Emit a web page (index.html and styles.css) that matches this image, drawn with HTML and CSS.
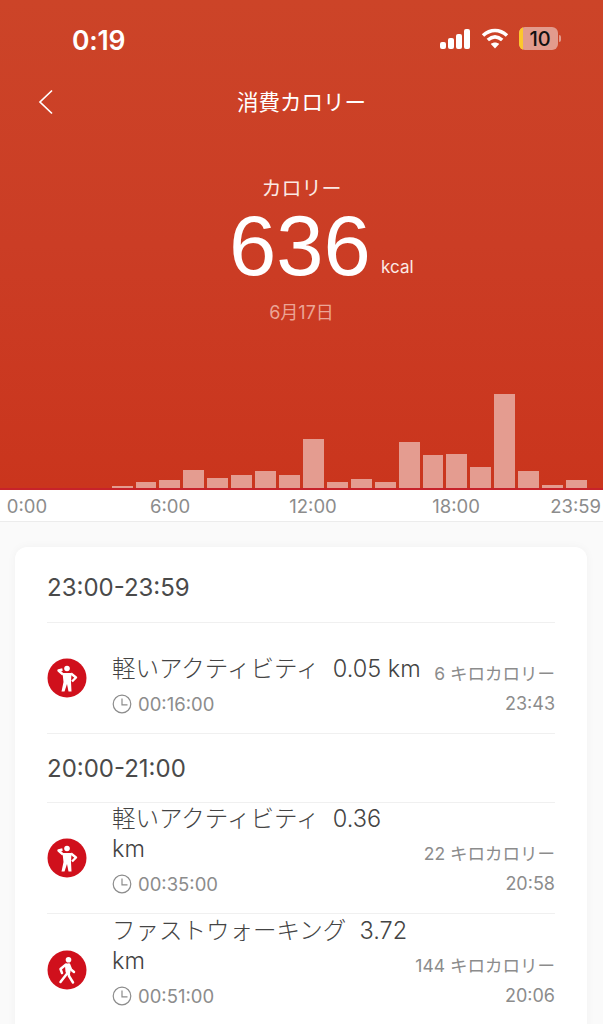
FILE: index.html
```html
<!DOCTYPE html>
<html lang="ja">
<head>
<meta charset="utf-8">
<title>消費カロリー</title>
<link rel="stylesheet" href="styles.css">
</head>
<body>
<div class="page">
  <header class="hero">
    <div class="status">
      <span class="clock-time">0:19</span>
      <div class="status-icons">
        <svg class="signal" width="31" height="20" viewBox="0 0 31 20"><rect x="0" y="13" width="6" height="7" rx="2"/><rect x="8" y="9" width="6" height="11" rx="2"/><rect x="16" y="5" width="6" height="15" rx="2"/><rect x="24" y="0" width="6" height="20" rx="2"/></svg>
        <svg class="wifi" width="28" height="21" viewBox="0 0 28 21"><path d="M2 7.5C9.5 .8 18.500 .8 26 7.500" /><path d="M6.800 12C11.500 8 16.500 8 21.200 12"/><path class="wifi-dot" d="M14 20.500L9.800 16C12.300 14 15.700 14 18.200 16Z"/></svg>
        <div class="battery">
          <div class="battery-body"><span class="battery-level"></span><span class="battery-num">10</span></div>
          <span class="battery-cap"></span>
        </div>
      </div>
    </div>
    <div class="navbar">
      <svg class="back" width="16" height="26" viewBox="0 0 16 26"><path d="M14 1.500L2 13L14 24.500"/></svg>
      <h1 class="nav-title">消費カロリー</h1>
    </div>
    <div class="summary">
      <div class="summary-label">カロリー</div>
      <div class="summary-value"><span class="value-num">636</span><span class="value-unit">kcal</span></div>
      <div class="summary-date">6月17日</div>
    </div>
    <div class="chart">
      <i></i><i></i><i></i><i></i>
      <i class="bar" style="height:2px"></i>
      <i class="bar" style="height:6px"></i>
      <i class="bar" style="height:8px"></i>
      <i class="bar" style="height:18px"></i>
      <i class="bar" style="height:10px"></i>
      <i class="bar" style="height:13px"></i>
      <i class="bar" style="height:17px"></i>
      <i class="bar" style="height:13px"></i>
      <i class="bar" style="height:49px"></i>
      <i class="bar" style="height:6px"></i>
      <i class="bar" style="height:9px"></i>
      <i class="bar" style="height:6px"></i>
      <i class="bar" style="height:46px"></i>
      <i class="bar" style="height:33px"></i>
      <i class="bar" style="height:34px"></i>
      <i class="bar" style="height:21px"></i>
      <i class="bar" style="height:94px"></i>
      <i class="bar" style="height:17px"></i>
      <i class="bar" style="height:3px"></i>
      <i class="bar" style="height:8px"></i>
    </div>
  </header>
  <div class="axis">
    <div class="ticks"><span class="tick">0:00</span><span class="tick">6:00</span><span class="tick">12:00</span><span class="tick">18:00</span></div>
    <span class="tick-end">23:59</span>
  </div>
  <main class="content">
    <section class="card">
      <h2 class="group-title">23:00-23:59</h2>
      <div class="row">
        <svg class="act-icon" viewBox="0 0 40 40"><use href="#stand"/></svg>
        <div class="row-main">
          <div class="row-title">軽いアクティビティ&nbsp; 0.05 km</div>
          <div class="row-dur"><svg class="dur-icon" viewBox="0 0 20 20"><use href="#clock"/></svg>00:16:00</div>
        </div>
        <div class="row-side"><div class="kcal">6 キロカロリー</div><div class="time">23:43</div></div>
      </div>
      <h2 class="group-title group-next">20:00-21:00</h2>
      <div class="row">
        <svg class="act-icon" viewBox="0 0 40 40"><use href="#stand"/></svg>
        <div class="row-main">
          <div class="row-title">軽いアクティビティ&nbsp; 0.36<br>km</div>
          <div class="row-dur"><svg class="dur-icon" viewBox="0 0 20 20"><use href="#clock"/></svg>00:35:00</div>
        </div>
        <div class="row-side"><div class="kcal">22 キロカロリー</div><div class="time">20:58</div></div>
      </div>
      <div class="row">
        <svg class="act-icon" viewBox="0 0 40 40"><use href="#walk"/></svg>
        <div class="row-main">
          <div class="row-title">ファストウォーキング&nbsp; 3.72<br>km</div>
          <div class="row-dur"><svg class="dur-icon" viewBox="0 0 20 20"><use href="#clock"/></svg>00:51:00</div>
        </div>
        <div class="row-side"><div class="kcal">144 キロカロリー</div><div class="time">20:06</div></div>
      </div>
    </section>
  </main>
</div>
<svg class="defs" width="0" height="0">
  <defs>
    <g id="clock"><circle cx="10" cy="10" r="8.800" fill="none" stroke="#8c8c8c" stroke-width="1.200"/><path d="M10 4.500V10.800H15.500" fill="none" stroke="#8c8c8c" stroke-width="1.200"/></g>
    <g id="stand">
      <circle cx="20" cy="20" r="19.500" fill="#d0101c"/>
      <circle cx="20" cy="10.500" r="2.800" fill="#fff"/>
      <path fill="none" stroke="#fff" stroke-width="2.400" stroke-linejoin="round" d="M15.500 11.500L11.500 12.500L16 16.500M24 15.500L29 19.500L25 23.500"/>
      <path fill="#fff" d="M15.500 15H24.500L24 24L24.500 33.500H21.500L20 26L17.500 33.500H14.500L16.500 24Z"/>
    </g>
    <g id="walk">
      <circle cx="20" cy="20" r="19.500" fill="#d0101c"/>
      <circle cx="21.500" cy="9.800" r="2.800" fill="#fff"/>
      <path fill="none" stroke="#fff" stroke-width="5" stroke-linecap="round" d="M20.500 16L21 21.500"/>
      <path fill="none" stroke="#fff" stroke-width="2.500" stroke-linejoin="round" stroke-linecap="round" d="M19 14.500L13.500 19L15 23M22 14.500L24 19.500L27 22M20.500 23L13.500 32M21.500 22L22 26L26 32.500"/>
    </g>
  </defs>
</svg>
</body>
</html>
```

FILE: styles.css
```css
* { box-sizing: border-box; }
html, body { margin: 0; padding: 0; }
body {
  width: 603px;
  height: 1024px;
  overflow: hidden;
  background: #fafafa;
  font-family: Inter, Roboto, "Noto Sans CJK JP", sans-serif;
}
.page { width: 603px; height: 1024px; overflow: hidden; display: flex; flex-direction: column; }
.defs { display: block; height: 0; }

.hero {
  flex: none;
  height: 490px;
  background: linear-gradient(#cc4428 0%, #cb3d25 50%, #ca351d 100%);
  border-bottom: 2px solid #c7222a;
  color: #fff;
  display: flex;
  flex-direction: column;
}
.status {
  flex: none;
  height: 78px;
  padding: 24px 42px 0 72px;
  display: flex;
  justify-content: space-between;
  align-items: flex-start;
}
.clock-time { font-size: 26.500px; font-weight: 600; line-height: 32px; letter-spacing: -.2px; }
.status-icons { display: flex; align-items: center; gap: 10px; padding-top: 3px; }
.signal { fill: #fff; }
.wifi { fill: #fff; }
.wifi path { fill: none; stroke: #fff; stroke-width: 3.600; }
.wifi .wifi-dot { fill: #fff; stroke: none; }
.battery { display: flex; align-items: center; gap: 1px; }
.battery-body {
  width: 39px; height: 23px; border-radius: 6px;
  background: #e29b8d;
  overflow: hidden;
  position: relative;
  display: flex; align-items: center; justify-content: center;
}
.battery-level { position: absolute; left: 0; top: 0; bottom: 0; width: 4px; background: #fcc72c; }
.battery-num { font-size: 20px; font-weight: 500; color: #111; padding-left: 3px; }
.battery-cap { width: 2px; height: 7px; background: #e29b8d; border-radius: 0 2px 2px 0; }

.navbar {
  flex: none;
  height: 48px;
  position: relative;
  display: flex;
  align-items: center;
  justify-content: center;
}
.back { position: absolute; left: 38px; top: 11px; fill: none; stroke: #fff; stroke-width: 1.700; }
.nav-title { margin: 0; font-size: 21.500px; font-weight: 400; line-height: 48px; color: #fff; }

.summary { display: flex; flex-direction: column; align-items: center; padding-top: 48px; flex: 1; }
.summary-label { font-size: 20px; line-height: 30px; color: #fbe9e4; }
.summary-value { position: relative; line-height: 88px; height: 88px; margin-top: -2px; }
.value-num { font-size: 85px; font-weight: 400; line-height: 88px; color: #fff; display: block; font-family: "Liberation Sans", sans-serif; margin-left: -3px; }
.value-unit { position: absolute; left: 149px; bottom: 13px; line-height: 20px; font-size: 17px; color: #fbe9e4; }
.summary-date { font-size: 18px; line-height: 24px; color: #eba596; margin-top: 11px; }

.chart {
  flex: none;
  height: 94px;
  padding: 0 16px;
  display: grid;
  grid-template-columns: repeat(24, 1fr);
  column-gap: 3px;
  align-items: end;
}
.bar { display: block; background: #e49c90; }

.axis {
  flex: none;
  height: 32px;
  background: #fff;
  border-bottom: 1px solid #ececec;
  padding: 0 2px 0 27px;
  display: flex;
  align-items: center;
  font-size: 18.500px;
  color: #8c8c8c;
}
.ticks { flex: 1; min-width: 0; display: flex; gap: 143px; }
.tick { width: 0; display: flex; justify-content: center; white-space: nowrap; }
.tick-end { flex: none; }

.content { flex: 1; padding: 25px 16px 0 15px; }
.card {
  background: #fff;
  border-radius: 12px 12px 0 0;
  box-shadow: 0 0 10px rgba(0,0,0,.04);
  padding: 0 32px;
  height: 520px;
}
.group-title {
  margin: 0;
  height: 76px;
  line-height: 82px;
  font-size: 24px;
  font-weight: 400;
  color: #4a4a4a;
  border-bottom: 1px solid #f0f0f0;
}
.group-next { height: 69px; line-height: 70px; }
.row {
  height: 111px;
  display: flex;
  align-items: flex-end;
  padding-bottom: 16px;
  border-bottom: 1px solid #f0f0f0;
}
.row:last-child { border-bottom: 0; }
.act-icon { width: 40px; height: 40px; flex: none; align-self: center; margin-top: 16px; margin-right: 25px; }
.row-main { flex: 1; min-width: 0; padding-right: 2px; }
.row-title { font-size: 23.500px; line-height: 30px; color: #444; font-weight: 300; white-space: nowrap; }
.row-dur { display: flex; align-items: center; height: 26px; margin-top: 7px; font-size: 18.500px; color: #8c8c8c; }
.dur-icon { width: 20px; height: 20px; margin-right: 6px; flex: none; }
.row-side { flex: none; text-align: right; color: #8c8c8c; }
.kcal { font-size: 17.500px; line-height: 26px; white-space: nowrap; }
.time { font-size: 18px; line-height: 26px; margin-top: 4px; }
```
